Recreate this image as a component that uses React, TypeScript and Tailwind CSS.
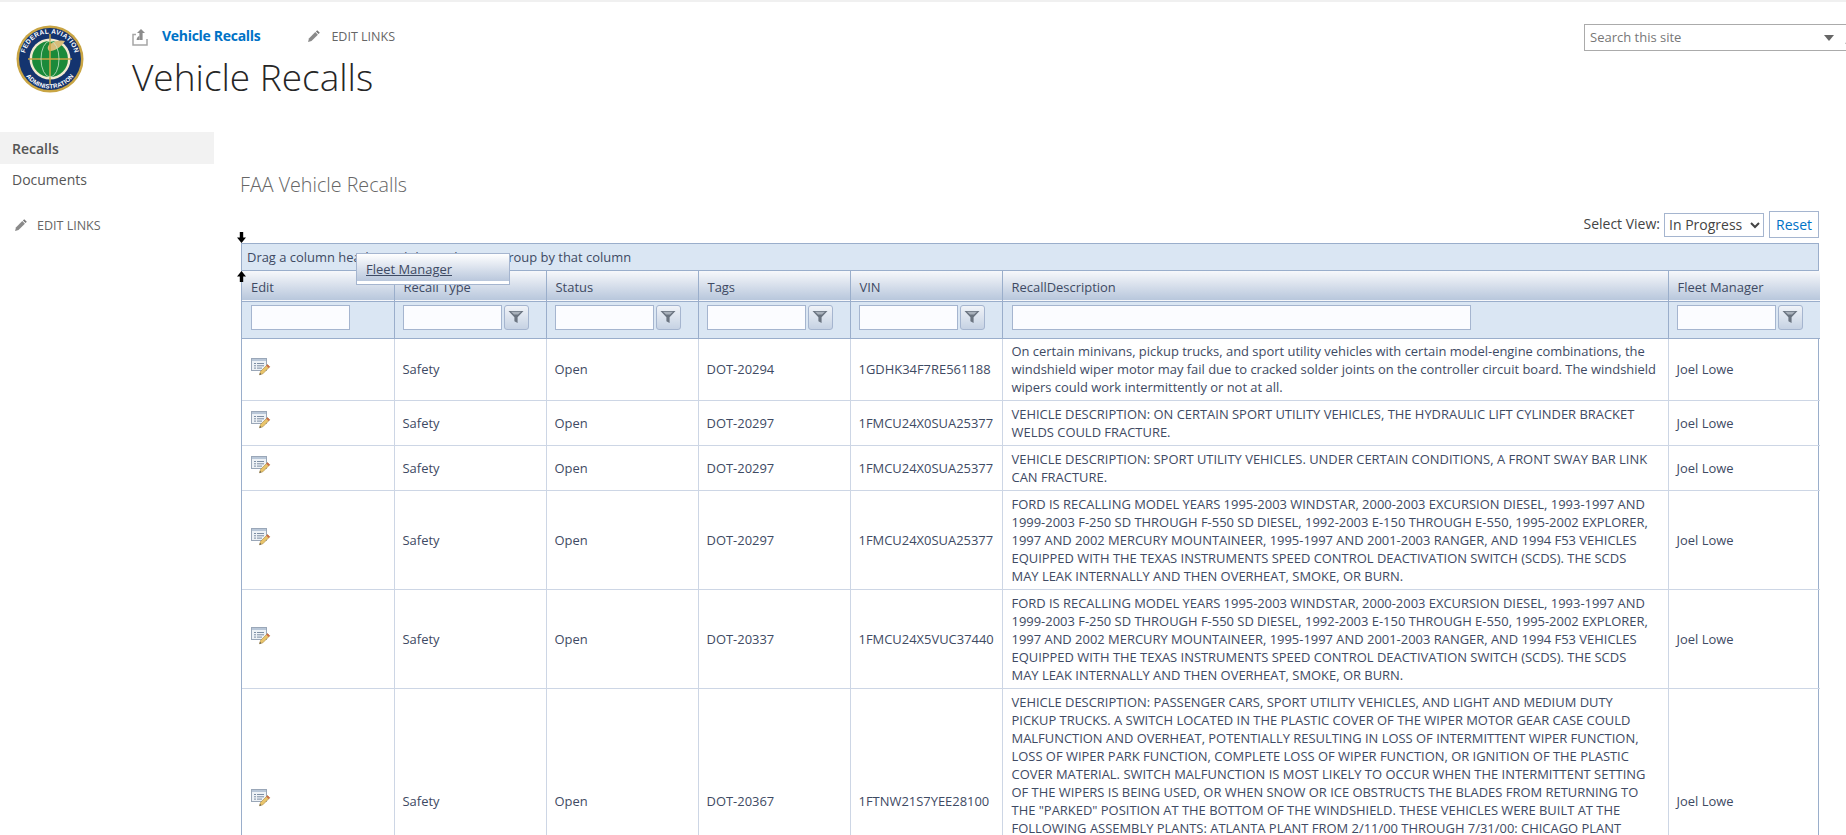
import React from 'react';

const FONT = "font-['Open_Sans','Liberation_Sans',sans-serif]";

type Recall = { tag: string; vin: string; lines: string[]; extra?: boolean };

const FORD = [
    'FORD IS RECALLING MODEL YEARS 1995-2003 WINDSTAR, 2000-2003 EXCURSION DIESEL, 1993-1997 AND',
    '1999-2003 F-250 SD THROUGH F-550 SD DIESEL, 1992-2003 E-150 THROUGH E-550, 1995-2002 EXPLORER,',
    '1997 AND 2002 MERCURY MOUNTAINEER, 1995-1997 AND 2001-2003 RANGER, AND 1994 F53 VEHICLES',
    'EQUIPPED WITH THE TEXAS INSTRUMENTS SPEED CONTROL DEACTIVATION SWITCH (SCDS). THE SCDS',
    'MAY LEAK INTERNALLY AND THEN OVERHEAT, SMOKE, OR BURN.',
];

const RECALLS: Recall[] = [
    {
        tag: 'DOT-20294',
        vin: '1GDHK34F7RE561188',
        lines: [
            'On certain minivans, pickup trucks, and sport utility vehicles with certain model-engine combinations, the',
            'windshield wiper motor may fail due to cracked solder joints on the controller circuit board. The windshield',
            'wipers could work intermittently or not at all.',
        ],
    },
    {
        tag: 'DOT-20297',
        vin: '1FMCU24X0SUA25377',
        lines: [
            'VEHICLE DESCRIPTION: ON CERTAIN SPORT UTILITY VEHICLES, THE HYDRAULIC LIFT CYLINDER BRACKET',
            'WELDS COULD FRACTURE.',
        ],
    },
    {
        tag: 'DOT-20297',
        vin: '1FMCU24X0SUA25377',
        lines: [
            'VEHICLE DESCRIPTION: SPORT UTILITY VEHICLES. UNDER CERTAIN CONDITIONS, A FRONT SWAY BAR LINK',
            'CAN FRACTURE.',
        ],
    },
    { tag: 'DOT-20297', vin: '1FMCU24X0SUA25377', lines: FORD },
    { tag: 'DOT-20337', vin: '1FMCU24X5VUC37440', lines: FORD },
    {
        tag: 'DOT-20367',
        vin: '1FTNW21S7YEE28100',
        extra: true,
        lines: [
            'VEHICLE DESCRIPTION: PASSENGER CARS, SPORT UTILITY VEHICLES, AND LIGHT AND MEDIUM DUTY',
            'PICKUP TRUCKS. A SWITCH LOCATED IN THE PLASTIC COVER OF THE WIPER MOTOR GEAR CASE COULD',
            'MALFUNCTION AND OVERHEAT, POTENTIALLY RESULTING IN LOSS OF INTERMITTENT WIPER FUNCTION,',
            'LOSS OF WIPER PARK FUNCTION, COMPLETE LOSS OF WIPER FUNCTION, OR IGNITION OF THE PLASTIC',
            'COVER MATERIAL. SWITCH MALFUNCTION IS MOST LIKELY TO OCCUR WHEN THE INTERMITTENT SETTING',
            'OF THE WIPERS IS BEING USED, OR WHEN SNOW OR ICE OBSTRUCTS THE BLADES FROM RETURNING TO',
            'THE "PARKED" POSITION AT THE BOTTOM OF THE WINDSHIELD. THESE VEHICLES WERE BUILT AT THE',
            'FOLLOWING ASSEMBLY PLANTS: ATLANTA PLANT FROM 2/11/00 THROUGH 7/31/00: CHICAGO PLANT',
        ],
    },
];

const Pencil = ({ className }: { className?: string }) => (
    <svg viewBox="0 0 14 14" className={className}>
        <path d="M10.2 1.2l2.6 2.6-1.3 1.3-2.6-2.6z" fill="#777" />
        <path d="M8.3 3.1l2.6 2.6-6.4 6.4-3.4.8.8-3.4z" fill="#8a8a8a" />
    </svg>
);

const ShareIcon = () => (
    <svg viewBox="0 0 16 18" className="w-[16px] h-[18px]">
        <path d="M4 6.5H1v10.5h14V11" fill="none" stroke="#a6a6a6" strokeWidth="1.5" />
        <path d="M9 1l4 4h-2.4v7H7.4V5H5z" fill="#8c8c8c" />
        <path d="M7.4 8C5.5 8.5 4.8 10 4.6 12h2.8z" fill="#8c8c8c" />
    </svg>
);

const FaaLogo = () => (
    <svg viewBox="0 0 68 68" className="w-[68px] h-[68px]">
        <defs>
            <path id="faaTop" d="M8.5 34a25.5 25.5 0 0 1 51 0" />
            <path id="faaBottom" d="M4.5 34a29.5 29.5 0 0 0 59 0" />
        </defs>
        <circle cx="34" cy="34" r="33.5" fill="#c9a544" />
        <circle cx="34" cy="34" r="31" fill="#14346f" />
        <circle cx="34" cy="34" r="20.5" fill="#f3ead0" />
        <circle cx="34" cy="34" r="18" fill="#1a8a3a" />
        <path d="M34 19c6-4 12-4 15-3-3 5-8 9-14 10-3 1-5-4-1-7z" fill="#d8bd7a" />
        <path d="M34 9v50M12 34h44" stroke="#c9a544" strokeWidth="1.5" />
        <ellipse cx="34" cy="34" rx="9" ry="18" fill="none" stroke="#c9e6c9" strokeWidth="0.8" />
        <text fill="#fff" fontSize="6.6" fontWeight="700" fontFamily="Liberation Sans, sans-serif" letterSpacing="0.3">
            <textPath href="#faaTop" startOffset="50%" textAnchor="middle">FEDERAL AVIATION</textPath>
        </text>
        <text fill="#fff" fontSize="6.2" fontWeight="700" fontFamily="Liberation Sans, sans-serif" letterSpacing="0.2">
            <textPath href="#faaBottom" startOffset="50%" textAnchor="middle">ADMINISTRATION</textPath>
        </text>
    </svg>
);

const EditFormIcon = () => (
    <svg viewBox="0 0 20 18" className="w-[20px] h-[18px]">
        <rect x="0.5" y="0.5" width="15" height="12" fill="#eef2f6" stroke="#9aa7b8" />
        <rect x="1" y="1" width="14" height="2" fill="#b9c7d8" />
        <path d="M3 5.5h2M6 5.5h7M3 7.8h2M6 7.8h7M3 10.1h2M6 10.1h5" stroke="#7d8ea3" strokeWidth="1" />
        <path d="M16.5 6.5l2.3 2.3-7 7-3.3 1 1-3.3z" fill="#e9c46a" stroke="#a88a44" strokeWidth="0.6" />
        <path d="M16.5 6.5l2.3 2.3-1.2 1.2-2.3-2.3z" fill="#c9694f" />
        <path d="M8.5 16.8l.5-1.8 1.3 1.3z" fill="#444" />
    </svg>
);

const FilterButton = () => (
    <button className="w-[25px] h-[25px] ml-[2px] shrink-0 rounded-[3px] border border-[#a5b5cf] bg-gradient-to-b from-[#f0f3f8] to-[#c6d2e3] flex items-center justify-center">
        <svg viewBox="0 0 16 14" className="w-[16px] h-[14px]">
            <path d="M0.5 1h15L9.6 7.2V13L6.4 11.2V7.2z" fill="#6b7480" />
            <path d="M3 1.8h10L10 4.6H6z" fill="#a9b1bb" />
        </svg>
    </button>
);

const FilterInput = ({ width = 'w-[99px]' }: { width?: string }) => (
    <input className={`${width} h-[25px] bg-[#fbfcff] border border-[#a5b5cf] outline-none block`} readOnly />
);

const COLUMNS = ['Edit', 'Recall Type', 'Status', 'Tags', 'VIN', 'RecallDescription', 'Fleet Manager'];

const Arrow = ({ up, className }: { up?: boolean; className: string }) => (
    <svg viewBox="0 0 9 11" className={`absolute w-[9px] h-[11px] ${className}`}>
        <path d={up ? 'M4.5 0L9 5.5H6.2V11H2.8V5.5H0z' : 'M4.5 11L9 5.5H6.2V0H2.8V5.5H0z'} fill="#000" />
    </svg>
);

const RecallGrid = () => (
    <div className="relative border border-[#9aaecb] border-b-0 text-[12.95px] leading-[18px] text-[#3e4a63]">
        <Arrow className="left-[-5px] top-[-12px]" />
        <Arrow up className="left-[-5px] top-[27px]" />
        <div className="absolute left-[114px] top-[9px] w-[154px] h-[32px] border border-[#a5b5cf] bg-white z-10">
            <div className="h-[27px] bg-gradient-to-b from-[#ffffff] to-[#b9c7dc] pl-[9px] pt-[6px]">
                <span className="underline">Fleet Manager</span>
            </div>
        </div>
        <div className="h-[27px] bg-[#dae6f3] px-[5px] flex items-center border-b border-[#9aaecb]">
            Drag a column header and drop it here to group by that column
        </div>
        <table className="w-full table-fixed border-collapse">
            <colgroup>
                <col className="w-[152px]" />
                <col className="w-[152px]" />
                <col className="w-[152px]" />
                <col className="w-[152px]" />
                <col className="w-[152px]" />
                <col className="w-[666px]" />
                <col className="w-[152px]" />
            </colgroup>
            <thead>
                <tr className="h-[30px] bg-gradient-to-b from-[#f7f8fb] to-[#b8c7dc] border-b border-[#9aaecb]">
                    {COLUMNS.map((c, i) => (
                        <th key={c} className={`font-normal text-left pl-[9px] pt-[2px] ${i > 0 ? 'border-l border-[#9aaecb]' : ''}`}>{c}</th>
                    ))}
                </tr>
                <tr className="h-[37px] bg-[#dae6f3] border-b border-[#9aaecb]">
                    {COLUMNS.map((c, i) => (
                        <td key={c} className={`pb-[5px] ${i === 0 || i === 5 ? 'pl-[9px]' : 'pl-[8px]'} ${i > 0 ? 'border-l border-[#9aaecb]' : ''}`}>
                            {c === 'RecallDescription' ? (
                                <FilterInput width="w-[459px]" />
                            ) : (
                                <div className="flex items-center">
                                    <FilterInput />
                                    {c !== 'Edit' && <FilterButton />}
                                </div>
                            )}
                        </td>
                    ))}
                </tr>
            </thead>
            <tbody>
                {RECALLS.map((r, i) => (
                    <tr key={i} className="border-b border-[#cdd6e5]">
                        <td className="pl-[9px] align-middle">
                            <div className="-mt-[5px]"><EditFormIcon /></div>
                        </td>
                        <td className="border-l border-[#cdd6e5] pl-[8px]">Safety</td>
                        <td className="border-l border-[#cdd6e5] pl-[8px]">Open</td>
                        <td className="border-l border-[#cdd6e5] pl-[8px]">{r.tag}</td>
                        <td className="border-l border-[#cdd6e5] pl-[8px] whitespace-nowrap">{r.vin}</td>
                        <td className={`border-l border-[#cdd6e5] pl-[9px] ${i === 0 ? 'pt-[3px]' : 'pt-[4px]'} ${r.extra ? 'pb-[76px]' : 'pb-[4px]'}`}>
                            {r.lines.map((l, j) => (
                                <div key={j} className="whitespace-nowrap">{l}</div>
                            ))}
                        </td>
                        <td className="border-l border-[#cdd6e5] pl-[8px]">Joel Lowe</td>
                    </tr>
                ))}
            </tbody>
        </table>
    </div>
);

export default function App() {
    return (
        <div className={`h-screen overflow-hidden bg-white border-t-2 border-[#f0f0f0] ${FONT}`}>
            <header className="h-[130px] flex">
                <div className="w-[132px] pl-[16px] pt-[23px] shrink-0"><FaaLogo /></div>
                <div className="pt-[25px] grow">
                    <div className="flex items-center h-[20px]">
                        <ShareIcon />
                        <a className="ml-[14px] -mt-[4px] text-[14px] font-bold tracking-[-0.3px] text-[#0072c6]">Vehicle Recalls</a>
                        <Pencil className="w-[14px] h-[14px] ml-[47px] -mt-[2px]" />
                        <span className="ml-[10px] text-[12.5px] text-[#666] mt-[1px]">EDIT LINKS</span>
                    </div>
                    <h1 className="text-[37px] leading-[50px] font-light text-[#262626] mt-[5px]">Vehicle Recalls</h1>
                </div>
                <div className="w-[262px] shrink-0 pt-[22px]">
                    <div className="h-[27px] w-[290px] border border-[#ababab] flex items-center pl-[5px] text-[13px] text-[#777]">
                        Search this site
                        <svg viewBox="0 0 10 6" className="w-[10px] h-[6px] ml-auto">
                            <path d="M0 0h10L5 6z" fill="#666" />
                        </svg>
                        <svg viewBox="0 0 14 14" className="w-[14px] h-[14px] ml-[11px] mr-[14px]">
                            <circle cx="8.5" cy="5.5" r="4" fill="none" stroke="#777" strokeWidth="1.5" />
                            <path d="M5.5 8.5L1 13" stroke="#777" strokeWidth="2" />
                        </svg>
                    </div>
                </div>
            </header>
            <div className="flex">
                <nav className="w-[214px] shrink-0 text-[14px] text-[#444]">
                    <div className="h-[32px] bg-[#f2f2f2] pl-[12px] flex items-center font-semibold text-[#555]">Recalls</div>
                    <div className="h-[30px] pl-[12px] flex items-center text-[#555]">Documents</div>
                    <div className="mt-[23px] pl-[14px] flex items-center">
                        <Pencil className="w-[14px] h-[14px] -mt-[2px]" />
                        <span className="ml-[9px] text-[12.5px] text-[#666]">EDIT LINKS</span>
                    </div>
                </nav>
                <main className="w-[1605px] shrink-0 pl-[27px] pt-[40px]">
                    <h2 className="text-[19.7px] leading-[26px] font-light text-[#666] ml-[-1px]">FAA Vehicle Recalls</h2>
                    <div className="h-[27px] mt-[13px] mb-[5px] flex justify-end items-center text-[14px] text-[#444]">
                        <span className="-mt-[3px]">Select View:</span>
                        <select className="ml-[4px] w-[100px] h-[24px] border border-[#a5b5cf] bg-white text-[14px] text-[#444]" defaultValue="In Progress">
                            <option>In Progress</option>
                        </select>
                        <button className="ml-[5px] h-[27px] w-[50px] border border-[#a5b5cf] text-[#0072c6]">Reset</button>
                    </div>
                    <RecallGrid />
                </main>
            </div>
        </div>
    );
}
